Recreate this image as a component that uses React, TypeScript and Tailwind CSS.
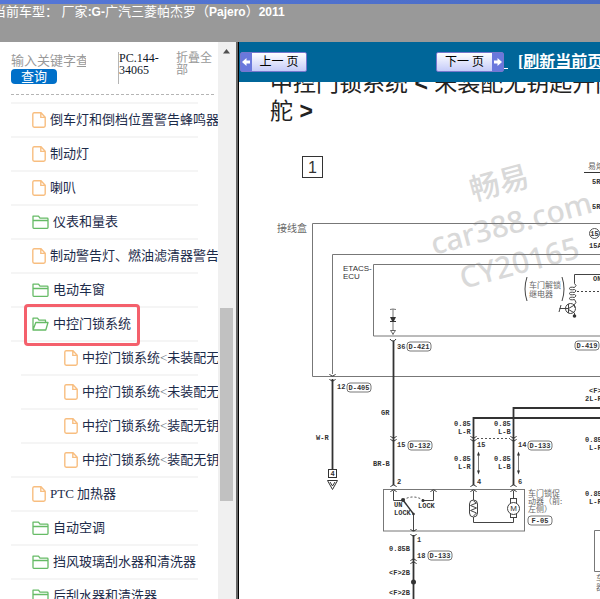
import React from 'react';

type IconKind = 'file' | 'folder' | 'open';

interface TreeNode {
    label: string;
    icon: IconKind;
    marked?: boolean;
    children?: string[];
}

const nodes: TreeNode[] = [
    { label: '倒车灯和倒档位置警告蜂鸣器', icon: 'file' },
    { label: '制动灯', icon: 'file' },
    { label: '喇叭', icon: 'file' },
    { label: '仪表和量表', icon: 'folder' },
    { label: '制动警告灯、燃油滤清器警告', icon: 'file' },
    { label: '电动车窗', icon: 'folder' },
    {
        label: '中控门锁系统',
        icon: 'open',
        marked: true,
        children: ['中控门锁系统<未装配无', '中控门锁系统<未装配无', '中控门锁系统<装配无钥', '中控门锁系统<装配无钥'],
    },
    { label: 'PTC 加热器', icon: 'file' },
    { label: '自动空调', icon: 'folder' },
    { label: '挡风玻璃刮水器和清洗器', icon: 'folder' },
    { label: '后刮水器和清洗器', icon: 'folder' },
];

const TreeIcon: React.FC<{ kind: IconKind }> = ({ kind }) => {
    if (kind === 'file') {
        return (
            <svg width="14" height="16" viewBox="0 0 14 16" fill="none" stroke="#f8be80" strokeWidth="1.4" className="shrink-0">
                <path d="M2 .8h7l4.200 4.400v8.600a1.400 1.400 0 0 1-1.400 1.400H2.200A1.400 1.400 0 0 1 .8 13.800V2.200A1.400 1.400 0 0 1 2 .8zM8.800 1v4.400h4.400" />
            </svg>
        );
    }
    return (
        <svg width="17" height="14" viewBox="0 0 17 14" fill="none" stroke="#66bb66" strokeWidth="1.3" strokeLinejoin="round" className="shrink-0">
            {kind === 'folder' ? (
                <path d="M1 12.300V1.200h5.500l1.500 2h7.200a.8.8 0 0 1 .8.8v8.500a.8.8 0 0 1-.8.8H1.800a.8.8 0 0 1-.8-.8zM1 5.500h15" />
            ) : (
                <path d="M1 12.500V1.200h4.500l1.500 2h6.500v2M1 13l2.800-7.500H16L13.800 13H1z" />
            )}
        </svg>
    );
};

const TreeRow: React.FC<{ label: string; icon: IconKind; marked?: boolean }> = ({ label, icon, marked }) => {
    const [before, after] = label.split('<');
    return (
        <a href="#" className="relative flex h-8 items-center gap-1 whitespace-nowrap text-[13px] text-[#1c2b4a]">
            <TreeIcon kind={icon} />
            <span>
                {before}
                {after && <span className="text-gray-500">&lt;</span>}
                {after}
            </span>
            {marked && <span className="absolute -left-2 -top-1 h-[42px] w-[116px] rounded-sm border-3 border-[#f4606c]" />}
        </a>
    );
};

const Sidebar: React.FC = () => (
    <aside className="flex w-[238px] shrink-0 border-r-2 border-[#666666]">
        <div className="min-w-0 flex-1 overflow-hidden pl-[11px] pt-2.5">
            <form className="mr-1 flex h-[43px] items-start border-b border-dashed border-[#b5b5b5]">
                <div className="w-[107px] shrink-0">
                    <input
                        type="text"
                        aria-label="关键字"
                        placeholder="输入关键字查询"
                        className="block h-[17px] w-[75px] text-[13px] leading-4 outline-none placeholder:text-[#999999]"
                    />
                    <button type="button" className="block h-[15px] w-[46px] rounded bg-[#0070c9] text-[13px] leading-[14px] text-white">
                        查询
                    </button>
                </div>
                <div className="h-8 w-[58px] shrink-0 border-l border-[#b5b5b5] text-xs leading-3 text-gray-900">
                    PC.144-
                    <br />
                    34065
                </div>
                <a href="#" className="text-xs leading-3 text-[#999999]">
                    折叠全部
                </a>
            </form>
            <ul className="pt-[7px]">
                <li className="mr-5 border-t-2 border-[#f5f5f5]" />
                {nodes.map(node => (
                    <li key={node.label}>
                        <div className="pl-[21px]">
                            <TreeRow label={node.label} icon={node.icon} marked={node.marked} />
                        </div>
                        <div className="mr-5 h-0.5 bg-[#f5f5f5]" />
                        {node.children && (
                            <ul>
                                {node.children.map((child, i) => (
                                    <li key={i}>
                                        <div className="pl-[53px]">
                                            <TreeRow label={child} icon="file" />
                                        </div>
                                        <div className={i === 3 ? 'mr-5 h-0.5 bg-[#f5f5f5]' : 'ml-2.5 mr-5 h-0.5 bg-[#f5f5f5]'} />
                                    </li>
                                ))}
                            </ul>
                        )}
                    </li>
                ))}
            </ul>
        </div>
        <div className="flex w-[18px] flex-col bg-[#f0f0f0] pl-0.5 pr-[3px]">
            <svg viewBox="0 0 13 18" className="h-[18px] w-[13px]" fill="#505050">
                <path d="M3 11.500 6.500 7 10 11.500z" />
            </svg>
            <div className="mt-[248px] h-[193px] bg-[#c1c1c1]" />
        </div>
    </aside>
);

const Toolbar: React.FC = () => (
    <nav className="flex h-10 shrink-0 items-center overflow-hidden whitespace-nowrap bg-[#006699] pl-px text-white">
        <button type="button" className="flex h-5 w-[67px] shrink-0 items-center rounded-xs border border-[#7777cc] bg-linear-to-b from-white to-[#c5cbf8] text-xs text-black">
            <span className="flex h-full w-[11px] items-center bg-[#6a78dc]">
                <svg width="11" height="10" viewBox="0 0 11 10" fill="#fff">
                    <path d="M1 5 5.500 1v2.500H9v3H5.500V9z" />
                </svg>
            </span>
            <span className="flex-1">上一 页</span>
        </button>
        <button type="button" className="ml-[129px] flex h-5 w-[68px] shrink-0 items-center rounded-xs border border-[#7777cc] bg-linear-to-b from-white to-[#c5cbf8] text-xs text-black">
            <span className="flex-1">下一 页</span>
            <span className="flex h-full w-[11px] items-center bg-[#6a78dc]">
                <svg width="11" height="10" viewBox="0 0 11 10" fill="#fff">
                    <path d="M10 5 5.500 1v2.500H2v3h3.500V9z" />
                </svg>
            </span>
        </button>
        <a href="#" className="whitespace-pre text-base font-bold underline"> </a>
        <a href="#" className="ml-2.5 text-base font-bold underline">
            [刷新当前页]
        </a>
    </nav>
);

// connector halves: a shallow cup, opening up or down
const Cup: React.FC<{ x: number; y: number; flip?: boolean }> = ({ x, y, flip }) => (
    <path
        d={flip ? `M${x - 3} ${y + 2}q1-2 3-2t3 2` : `M${x - 3} ${y}q1 2 3 2t3-2`}
        fill="none"
        stroke="#333"
        strokeWidth="1"
    />
);

const Tag: React.FC<{ x: number; y: number; children: string }> = ({ x, y, children }) => (
    <g>
        <rect x={x} y={y - 7} width="24" height="9" rx="3" fill="none" stroke="#555" strokeWidth="0.8" />
        <text x={x + 12} y={y} textAnchor="middle">{children}</text>
    </g>
);

const labels: [number, number, string][] = [
    [397, 349, '36'], [337, 389, '12'], [381, 415, 'GR'], [316, 440, 'W-R'],
    [397, 447, '15'], [373, 466, 'BR-B'], [397, 484, '2'],
    [454, 426, '0.85'], [458, 434, 'L-R'], [494, 426, '0.85'], [498, 434, 'L-B'],
    [477, 447, '15'], [518, 447, '14'],
    [454, 461, '0.85'], [458, 469, 'L-R'], [494, 461, '0.85'], [498, 469, 'L-B'],
    [477, 484, '4'], [518, 484, '6'],
    [394, 507, 'UN'], [394, 515, 'LOCK'], [418, 508, 'LOCK'],
    [417, 542, '1'], [389, 551, '0.85B'], [417, 558, '18'],
    [389, 575, '<F>2B'], [389, 595, '<F>2B'],
    [589, 393, '<F>'], [585, 401, '2L-R'], [585, 442, '0.85'], [589, 450, 'L-R'],
    [585, 496, '0.85'], [589, 504, 'L-R'],
    [592, 184, '5R'], [592, 209, '5R'], [589, 248, '15A'], [593, 281, 'ON'],
];

const Diagram: React.FC = () => (
    <svg
        width="420"
        height="520"
        viewBox="239 125 420 520"
        className="block max-w-none font-['Liberation_Mono',monospace] text-[7px] font-bold"
        fill="#333"
    >
        <g className="font-['Noto_Sans','Noto_Sans_CJK_SC',sans-serif] text-[30px] font-medium" fill="#d9d9d9">
            <text transform="translate(473 201) rotate(-15)">畅易</text>
            <text transform="translate(434 255) rotate(-15)">car388.com</text>
            <text transform="translate(463 289) rotate(-15)">CY20165</text>
        </g>

        <rect x="302.500" y="156.500" width="20" height="21" fill="none" stroke="#333" />
        <text x="312.500" y="173" textAnchor="middle" className="font-['Liberation_Sans',sans-serif] text-base font-normal">1</text>

        <g fill="none" stroke="#777" strokeWidth="1">
            <path d="M660 223.500H312.500v153H660" />
            <path d="M660 254.500H332.500V374" />
            <path d="M660 264.500H373.500v71.500H660" />
            <rect x="383.500" y="489.500" width="141" height="41.500" />
            <path d="M660 530.500h-65.500v41H660" />
            <path d="M584 172.500h76" stroke="#333" />
            <path d="M393 309v26M390 309.500l3-.5 3 .5" />
            <path d="M393.500 491v9.500H403M433.500 491v9.500H423M413.500 514v17" stroke="#444" />
            <path d="M403 500q10-6 20 0" strokeDasharray="2 2" stroke="#444" />
            <path d="M403 500l10.500 14" stroke="#333" strokeWidth="1.400" />
            <path d="M477 438.500h33" strokeDasharray="2 2" stroke="#555" />
            <path d="M478.500 453v20M518.500 453v20" />
        </g>

        {/* heavy wires */}
        <g fill="none" stroke="#333" strokeWidth="1.800">
            <path d="M332.500 379v90" />
            <path d="M393.500 341v144" />
            <path d="M413.500 535v110" />
            <path d="M660 418H473.500v67" />
            <path d="M660 408H513.500v77" />
        </g>

        <path d="M390 317h6l-2 4h-2zM390 321h6v1h-6zM401 500a2 2 0 1 0 4 0 2 2 0 1 0-4 0" />
        <circle cx="423" cy="500.500" r="1.500" />
        <circle cx="413.500" cy="514" r="1.300" />
        <circle cx="413.500" cy="582" r="2.500" />
        <path d="M390.500 330.500h5L393 334z" fill="#fff" stroke="#444" strokeWidth="0.8" />
        <path d="M478.500 451.500l-1.500 4h3zM478.500 474.500l-1.500-4h3zM518.500 451.500l-1.500 4h3zM518.500 474.500l-1.500-4h3z" />

        <Cup x={332.5} y={374} />
        <Cup x={332.5} y={379} />
        <Cup x={393} y={339} />
        {[393.5, 473.5, 513.5].map(x => (
            <g key={x}>
                <Cup x={x} y={436} />
                <Cup x={x} y={439} />
                <Cup x={x} y={485} flip />
                <Cup x={x} y={490} flip />
            </g>
        ))}
        <Cup x={433.5} y={490} flip />
        <Cup x={413.5} y={529} />
        <Cup x={413.5} y={534} />
        <Cup x={413.5} y={559} flip />
        <Cup x={413.5} y={562} flip />

        {/* wire end marker */}
        <g fill="#fff" stroke="#333">
            <rect x="328.500" y="469.500" width="8" height="8" />
            <path d="M327.500 480.500h10l-5 9zM330 482l2.500 4 2.500-4" />
        </g>
        <text x="332.500" y="476" textAnchor="middle">4</text>

        {/* thermistor and motor */}
        <g fill="none" stroke="#444" strokeWidth="1">
            <path d="M473.500 491v9M473.500 517v5.500h40V517M513.500 491v8" />
            <rect x="469.500" y="500" width="8" height="17" rx="4" />
            <path d="M473.500 501l3 2-6 2.500 6 2.500-6 2.500 6 2.500-3 3" />
            <rect x="510.500" y="498.500" width="6" height="19" fill="#fff" />
            <circle cx="513.500" cy="508.500" r="6" fill="#fff" />
        </g>
        <text x="513.500" y="511" textAnchor="middle" className="font-['Liberation_Sans',sans-serif] text-[8px] font-normal">M</text>

        {/* relay driver */}
        <g fill="none" stroke="#444" strokeWidth="1">
            <path d="M660 274.500h-85.500v9q3 2 0 4-5-1-5 1t5 1q3 1 0 3-5-1-5 1t5 1q3 1 0 3-5-1-5 1t5 1q3 3 0 5v3" />
            <path d="M577 291.500h83" strokeDasharray="2 2" />
            <circle cx="570.500" cy="308.500" r="5" />
            <path d="M568.500 304v9M559.500 308.500h9l6-3.500M568.500 309.500l6 3.500v3M561 305l-2 7" />
            <path d="M527 277q-4 12 0 24M562 277q4 12 0 24" />
        </g>
        <circle cx="574.500" cy="316" r="1.800" />

        <circle cx="594.500" cy="233.500" r="5" fill="none" stroke="#555" />
        <text x="594.500" y="236" textAnchor="middle">15</text>

        {labels.map(([x, y, text]) => (
            <text key={`${x}-${y}`} x={x} y={y}>{text}</text>
        ))}
        <Tag x={407} y={349}>D-421</Tag>
        <Tag x={347} y={390}>D-405</Tag>
        <Tag x={408} y={448}>D-132</Tag>
        <Tag x={528} y={448}>D-133</Tag>
        <Tag x={428} y={558}>D-133</Tag>
        <Tag x={528} y={523}>F-05</Tag>
        <Tag x={575} y={348}>D-419</Tag>

        <g className="font-['Liberation_Sans',sans-serif] text-[8px] font-normal">
            <text x="343" y="271">ETACS-</text>
            <text x="343" y="279">ECU</text>
        </g>

        <g className="font-['Noto_Sans_CJK_SC',sans-serif] text-[8px] font-normal" fill="#666">
            <text x="277" y="232" className="text-[10px]">接线盒</text>
            <text x="529" y="288">车门解锁</text>
            <text x="529" y="297">继电器</text>
            <text x="528" y="496">车门锁促</text>
            <text x="528" y="504">动器（前:</text>
            <text x="528" y="512">左侧）</text>
            <text x="588" y="169">易熔线</text>
            <text x="596" y="581">车门</text>
            <text x="596" y="590">器</text>
        </g>
    </svg>
);

export default function App() {
    return (
        <div className="flex h-screen flex-col overflow-hidden bg-white font-['Liberation_Serif','Noto_Sans_CJK_SC',serif]">
            <div className="h-1 shrink-0 bg-linear-to-r from-[#5577d8] to-[#4a6cc4]" />
            <header className="h-[38px] shrink-0 overflow-hidden whitespace-nowrap bg-[#999999] font-['Liberation_Sans','Noto_Sans_CJK_SC',sans-serif] text-white">
                <h1 className="-ml-[7px] text-[13px] leading-4">
                    当前车型： 厂家<b className="text-xs">:G-</b>广汽三菱帕杰罗（<b className="text-xs">Pajero</b>）<b className="text-xs">2011</b>
                </h1>
            </header>
            <div className="flex min-h-0 flex-1">
                <Sidebar />
                <main className="flex min-w-0 flex-1 flex-col border-l border-black">
                    <Toolbar />
                    <div className="min-h-0 flex-1 overflow-hidden">
                        <h2 className="-mt-[13px] whitespace-nowrap pl-[31px] font-['Liberation_Sans','Noto_Sans_CJK_SC',sans-serif] text-[23px] leading-7 text-[#222]">
                            中控门锁系统 <b>&lt;</b> 未装配无钥匙开闭
                            <br />舵 <b>&gt;</b>
                        </h2>
                        <Diagram />
                    </div>
                </main>
            </div>
        </div>
    );
}
